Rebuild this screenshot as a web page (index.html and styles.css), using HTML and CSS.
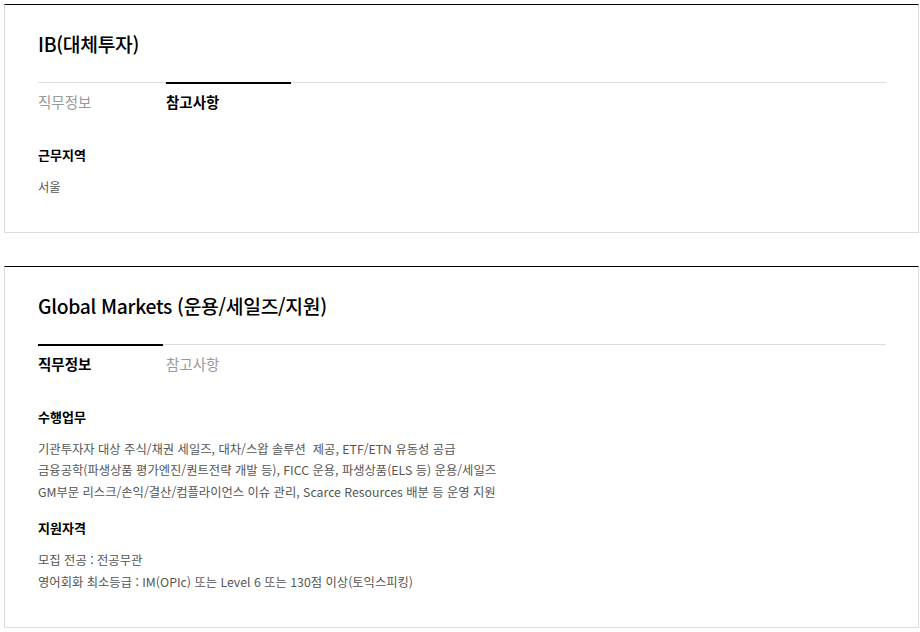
FILE: index.html
```html
<!DOCTYPE html>
<html lang="ko">
  <head>
    <meta charset="UTF-8" />
    <meta name="viewport" content="width=device-width, initial-scale=1.0" />
    <title>채용 직무 안내</title>
    <link rel="stylesheet" href="styles.css">
  </head>
  <body>
    <div class="job-card">
      <h3 class="job-title">IB(대체투자)</h3>
      <ul class="tabs">
        <li class="tab">직무정보</li>
        <li class="tab active">참고사항</li>
      </ul>
      <div class="tab-body">
        <h4 class="info-head">근무지역</h4>
        <p class="info-text">서울</p>
      </div>
    </div>

    <div class="job-card">
      <h3 class="job-title">Global Markets (운용/세일즈/지원)</h3>
      <ul class="tabs">
        <li class="tab active">직무정보</li>
        <li class="tab">참고사항</li>
      </ul>
      <div class="tab-body">
        <h4 class="info-head">수행업무</h4>
        <p class="info-text">
          기관투자자 대상 주식/채권 세일즈, 대차/스왑 솔루션&nbsp; 제공, ETF/ETN 유동성 공급<br>
          금융공학(파생상품 평가엔진/퀀트전략 개발 등), FICC 운용, 파생상품(ELS 등) 운용/세일즈<br>
          GM부문 리스크/손익/결산/컴플라이언스 이슈 관리, Scarce Resources 배분 등 운영 지원
        </p>
        <h4 class="info-head">지원자격</h4>
        <p class="info-text">
          모집 전공 : 전공무관<br>
          영어회화 최소등급 : IM(OPIc) 또는 Level 6 또는 130점 이상(토익스피킹)
        </p>
      </div>
    </div>
  </body>
</html>
```

FILE: styles.css
```css
body {
  margin: 0;
  padding: 4px 1px 0 4px;
  background: #fff;
  color: #000;
  font-family: "Noto Sans CJK KR", "Noto Sans", sans-serif;
}

.job-card {
  border: 1px solid #dcdcdc;
  border-top: 1px solid #000;
  padding: 0 32px 0 33px;
  margin-bottom: 33px;
}

.job-title {
  margin: 0;
  padding-top: 26px;
  height: 51px;
  font-size: 19.3px;
  font-weight: 500;
  line-height: 26px;
  letter-spacing: -0.3px;
}

.tabs {
  list-style: none;
  margin: 0;
  padding: 0;
  display: flex;
  gap: 3px;
  border-top: 1px solid #ddd;
}

.tab {
  width: 125px;
  margin-top: -1px;
  border-top: 2px solid transparent;
  padding-top: 8px;
  font-size: 14.5px;
  line-height: 20px;
  color: #999;
}

.tab.active {
  border-top-color: #000;
  color: #000;
  font-weight: 700;
}

.tab-body {
  padding: 33px 0 33px;
}

.info-head {
  margin: 0 0 12px;
  font-size: 13px;
  font-weight: 700;
  line-height: 20px;
}

.info-text {
  margin: 0 0 15px;
  font-size: 12.3px;
  line-height: 21.6px;
  color: #555;
}

.info-text:last-child {
  margin-bottom: 0;
}
```
